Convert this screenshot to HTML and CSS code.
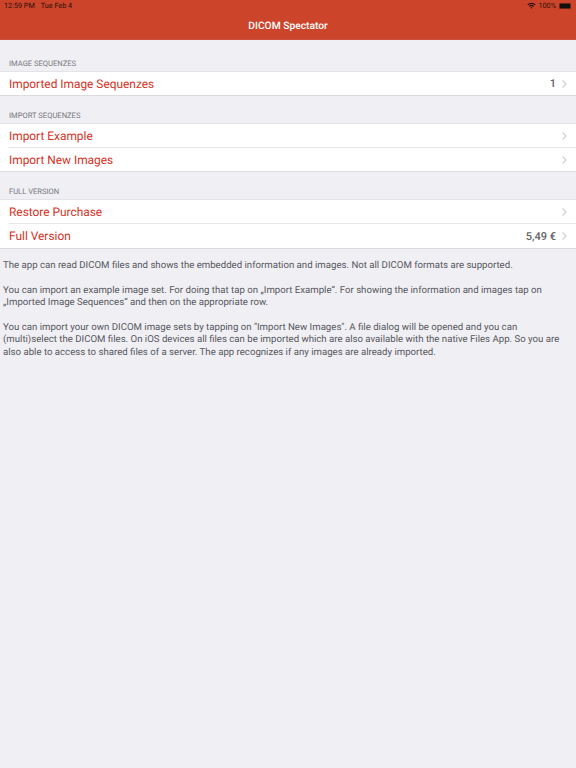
FILE: index.html
```html
<!DOCTYPE html>
<html lang="en">
<head>
  <meta charset="UTF-8">
  <meta name="viewport" content="width=device-width, initial-scale=1.0">
  <title>DICOM Spectator</title>
  <link rel="stylesheet" href="styles.css">
</head>
<body>
  <header class="nav">
    <div class="status">
      <span class="time">12:59 PM</span>
      <span>Tue Feb 4</span>
      <span class="status-right">
        <svg class="wifi" width="9" height="7" viewBox="0 0 10 8">
          <path d="M0.2 2.7A7 7 0 0 1 9.8 2.7L8.8 3.8A5.5 5.5 0 0 0 1.2 3.8Z"/>
          <path d="M2 4.6A4.4 4.4 0 0 1 8 4.6L7 5.6A3 3 0 0 0 3 5.6Z"/>
          <path d="M3.8 6.4A1.8 1.8 0 0 1 6.2 6.4L5 7.7Z"/>
        </svg>
        <span>100%</span>
        <span class="battery"><i></i></span>
      </span>
    </div>
    <h1 class="title">DICOM Spectator</h1>
  </header>

  <div class="section-label first">IMAGE SEQUENZES</div>
  <ul class="group">
    <li>
      <span class="name">Imported Image Sequenzes</span>
      <span class="value">1</span>
      <svg class="chevron" width="6" height="10" viewBox="0 0 6 10"><path d="M1.5 1.5L5 5L1.5 8.5"/></svg>
    </li>
  </ul>

  <div class="section-label">IMPORT SEQUENZES</div>
  <ul class="group">
    <li>
      <span class="name">Import Example</span>
      <svg class="chevron" width="6" height="10" viewBox="0 0 6 10"><path d="M1.5 1.5L5 5L1.5 8.5"/></svg>
    </li>
    <li>
      <span class="name">Import New Images</span>
      <svg class="chevron" width="6" height="10" viewBox="0 0 6 10"><path d="M1.5 1.5L5 5L1.5 8.5"/></svg>
    </li>
  </ul>

  <div class="section-label">FULL VERSION</div>
  <ul class="group">
    <li>
      <span class="name">Restore Purchase</span>
      <svg class="chevron" width="6" height="10" viewBox="0 0 6 10"><path d="M1.5 1.5L5 5L1.5 8.5"/></svg>
    </li>
    <li class="tall">
      <span class="name">Full Version</span>
      <span class="value">5,49 €</span>
      <svg class="chevron" width="6" height="10" viewBox="0 0 6 10"><path d="M1.5 1.5L5 5L1.5 8.5"/></svg>
    </li>
  </ul>

  <div class="info">
    <p>The app can read DICOM files and shows the embedded information and images. Not all DICOM formats are supported.</p>
    <p>You can import an example image set. For doing that tap on „Import Example“. For showing the information and images tap on „Imported Image Sequences“ and then on the appropriate row.</p>
    <p>You can import your own DICOM image sets by tapping on "Import New Images". A file dialog will be opened and you can (multi)select the DICOM files. On iOS devices all files can be imported which are also available with the native Files App. So you are also able to access to shared files of a server. The app recognizes if any images are already imported.</p>
  </div>
</body>
</html>
```

FILE: styles.css
```css
*{
  margin: 0;
  padding: 0;
  box-sizing: border-box;
}
ul,li{
  list-style: none;
}
body{
  height: 768px;
  overflow: hidden;
  background-color: #efeff4;
  font-family: "Roboto", "Liberation Sans", sans-serif;
  text-rendering: geometricPrecision;
}
.nav{
  height: 40px;
  background-color: #cc452b;
  border-bottom: 1px solid #c8503a;
}
.status{
  display: flex;
  align-items: center;
  gap: 6px;
  height: 11px;
  padding: 0 4px;
  font-size: 7.25px;
  line-height: 11px;
  color: #2a0f08;
}
.status-right{
  display: flex;
  align-items: center;
  gap: 2px;
  margin-left: auto;
  padding-right: 1px;
}
.wifi{
  fill: #2a0f08;
}
.battery{
  width: 12px;
  height: 6px;
  margin-left: 1px;
  padding: 1px;
  border-radius: 1.5px;
  background-color: #6b2314;
}
.battery i{
  display: block;
  height: 100%;
  background-color: #111;
}
.title{
  margin-top: 3px;
  text-align: center;
  font-size: 10.25px;
  line-height: 24px;
  font-weight: 500;
  color: #fff;
}
.section-label{
  height: 27px;
  padding: 15px 9px 0;
  font-size: 7.6px;
  line-height: 10px;
  color: #77777c;
}
.section-label.first{
  height: 31px;
  padding-top: 19px;
}
.group{
  background-color: #fff;
  border-top: 1px solid #e3e3e8;
  border-bottom: 1px solid #dcdce0;
}
.group li{
  display: flex;
  align-items: center;
  height: 23px;
  margin-left: 9px;
  padding-right: 9px;
}
.group li + li{
  height: 24px;
  border-top: 1px solid #e6e6ea;
}
.group li.tall{
  height: 25px;
}
.name{
  font-size: 11.9px;
  color: #d5331f;
}
.value{
  margin-left: auto;
  font-size: 11px;
  font-weight: 500;
  color: #636366;
}
.chevron{
  margin-left: 5px;
  fill: none;
  stroke: #cfcfd3;
  stroke-width: 1.1;
}
.name + .chevron{
  margin-left: auto;
}
.info{
  padding: 11px 3px 0;
  font-size: 9.65px;
  line-height: 12.5px;
  color: #57575c;
}
.info p{
  margin-bottom: 12px;
}
```
